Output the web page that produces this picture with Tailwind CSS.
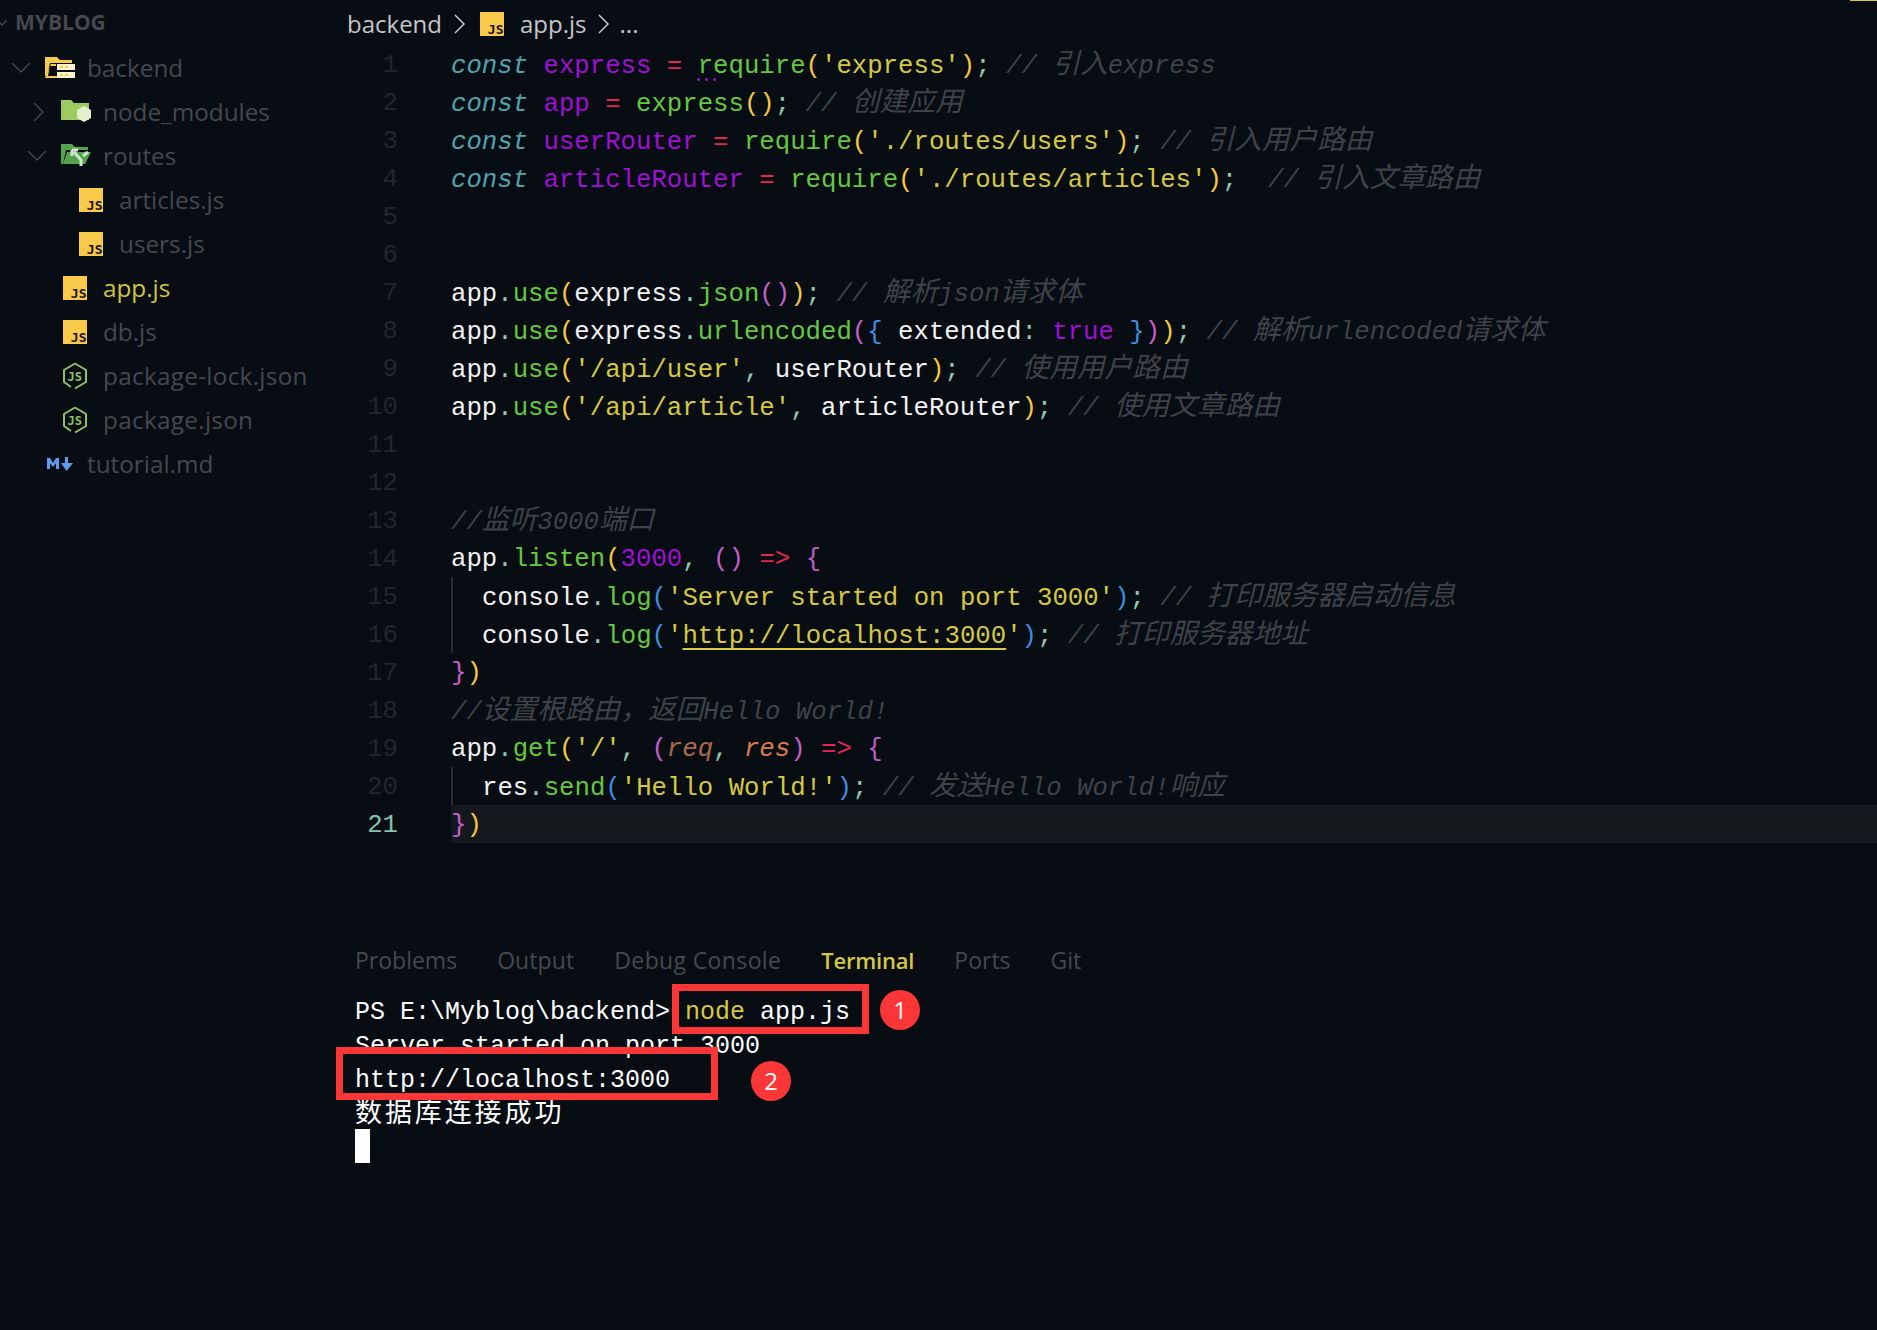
<!DOCTYPE html>
<html lang="en">
<head>
    <meta charset="UTF-8">
    <title>app.js - myblog</title>
    <script src="https://cdn.jsdelivr.net/npm/@tailwindcss/browser@4"></script>
</head>
<body class="bg-[#080c13]">
<svg class="hidden">
    <symbol id="js" viewBox="0 0 24 24"><rect width="24" height="24" fill="#f8ca4a"/><text x="23.500" y="22" text-anchor="end" font-family="DejaVu Sans Mono" font-weight="700" font-size="13" fill="#15130c">JS</text></symbol>
    <symbol id="nodejs" viewBox="0 0 24 28"><path d="M12 1.500 23 8v12l-11 6.500M8 25 1 20V8l11-6.500" fill="none" stroke="#8cc265" stroke-width="2"/><text x="19" y="19" text-anchor="end" font-family="DejaVu Sans Mono" font-weight="700" font-size="12" fill="#8cc265">JS</text></symbol>
</svg>

<div class="relative flex w-[1877px] h-[1330px] overflow-hidden bg-[#080c13]">
    <div class="absolute right-0 top-0 w-[27px] h-px bg-[#d6c93f]"></div>

    <!-- Explorer -->
    <aside class="w-[347px] shrink-0 font-['Open_Sans',sans-serif] text-[#45494d] text-[24.3px]">
        <div class="h-[46px] flex items-center gap-[8px] -ml-[3px]">
            <svg width="10" height="10" viewBox="0 0 10 10"><path d="M0 2l5 5 5-5" fill="none" stroke="#45494d" stroke-width="1.500"/></svg>
            <span class="font-bold text-[21px]">MYBLOG</span>
        </div>
        <div class="h-11 flex items-center">
            <svg class="ml-[11px] w-[20px]" height="12" viewBox="0 0 20 12"><path d="M1 1l9 9 9-9" fill="none" stroke="#45494d" stroke-width="1.500"/></svg>
            <svg class="ml-[14px] w-[30px]" height="24" viewBox="0 0 30 24"><path d="M0 1h12l3 3h12v3H5L2 20H0z" fill="#f8ca4a"/><path d="M6 8h5v2H5l-2 10h9v2H0z" fill="#f8ca4a"/><rect x="12" y="8" width="18" height="6" fill="#fff3cf"/><rect x="12" y="16" width="18" height="6" fill="#fff3cf"/><rect x="15" y="10" width="3" height="2" fill="#f8ca4a"/><rect x="20" y="10" width="3" height="2" fill="#f8ca4a"/><rect x="15" y="18" width="3" height="2" fill="#f8ca4a"/><rect x="20" y="18" width="3" height="2" fill="#f8ca4a"/></svg>
            <span class="ml-[12px]">backend</span>
        </div>
        <div class="h-11 flex items-center">
            <svg class="ml-[33px] w-[11px]" height="20" viewBox="0 0 11 20"><path d="M1 1l9 9-9 9" fill="none" stroke="#45494d" stroke-width="1.500"/></svg>
            <svg class="ml-[17px] w-[30px]" height="24" viewBox="0 0 30 24"><path d="M0 0h10l3 3h15v17H0z" fill="#9ccb5f"/><path d="M23 6l7 4v8l-7 4-7-4v-8z" fill="#e2f0d0"/></svg>
            <span class="ml-[12px]">node_modules</span>
        </div>
        <div class="h-11 flex items-center">
            <svg class="ml-[27px] w-[20px]" height="12" viewBox="0 0 20 12"><path d="M1 1l9 9 9-9" fill="none" stroke="#45494d" stroke-width="1.500"/></svg>
            <svg class="ml-[14px] w-[30px]" height="24" viewBox="0 0 30 24"><path d="M0 0h11l3 3h13v3H5L2 20H0z" fill="#55a24f"/><path d="M6 8h24l-6 12H2z" fill="#55a24f"/><path d="M20 22v-6l-7-8M11 6h6M11 6v6M22 12l5-4" fill="none" stroke="#cfe8cb" stroke-width="3"/></svg>
            <span class="ml-[12px]">routes</span>
        </div>
        <div class="h-11 flex items-center pl-[79px]"><svg width="24" height="24"><use href="#js"/></svg><span class="ml-[16px]">articles.js</span></div>
        <div class="h-11 flex items-center pl-[79px]"><svg width="24" height="24"><use href="#js"/></svg><span class="ml-[16px]">users.js</span></div>
        <div class="h-11 flex items-center pl-[63px] text-[#d0c63e]"><svg width="24" height="24"><use href="#js"/></svg><span class="ml-[16px]">app.js</span></div>
        <div class="h-11 flex items-center pl-[63px]"><svg width="24" height="24"><use href="#js"/></svg><span class="ml-[16px]">db.js</span></div>
        <div class="h-11 flex items-center pl-[63px]"><svg width="24" height="28"><use href="#nodejs"/></svg><span class="ml-[16px] tracking-[0.3px]">package-lock.json</span></div>
        <div class="h-11 flex items-center pl-[63px]"><svg width="24" height="28"><use href="#nodejs"/></svg><span class="ml-[16px] tracking-[0.3px]">package.json</span></div>
        <div class="h-11 flex items-center pl-[47px]">
            <svg width="27" height="14" viewBox="0 0 27 14"><path d="M0 1h3l3 5 3-5h3v11H9V6L6 10 3 6v6H0z" fill="#5b9df0"/><path d="M18 0h3v6h5l-6.500 8L14 6h4z" fill="#5b9df0"/></svg>
            <span class="ml-[13px]">tutorial.md</span>
        </div>
    </aside>

    <main class="flex-1 min-w-0 flex flex-col">
        <!-- Breadcrumb -->
        <div class="h-[45px] pt-[2px] shrink-0 flex items-center font-['Open_Sans',sans-serif] text-[24px] text-[#c4c6c8]">
            <span>backend</span>
            <svg class="ml-[12px]" width="12" height="20" viewBox="0 0 12 20"><path d="M1 1l9 9-9 9" fill="none" stroke="#c4c6c8" stroke-width="1.500"/></svg>
            <svg class="ml-[14px]" width="24" height="24"><use href="#js"/></svg>
            <span class="ml-[16px]">app.js</span>
            <svg class="ml-[11px]" width="12" height="20" viewBox="0 0 12 20"><path d="M1 1l9 9-9 9" fill="none" stroke="#c4c6c8" stroke-width="1.500"/></svg>
            <span class="ml-[10px]">...</span>
        </div>

        <!-- Editor -->
        <div class="shrink-0 flex flex-col font-['Liberation_Mono','Noto_Sans_CJK_SC',monospace] text-[25.7px] leading-[42px] whitespace-pre text-[#f2f2f2]">
            <div class="h-[38px] flex"><div class="w-[51px] text-right text-[#23272b]">1</div><div class="relative ml-[53px]"><span class="italic text-[#4fa3ad]">const</span> <span class="text-[#a00fd6]">express</span> <span class="text-[#e5264f]">=</span> <span class="text-[#64c840]">require</span><span class="text-[#f5c842]">(</span><span class="text-[#d6c93f]">'express'</span><span class="text-[#f5c842]">)</span><span class="text-[#8fc9b0]">;</span> <span class="italic text-[#3f4347]">// <span class="text-[27.7px]">引入</span>express</span><div class="absolute left-[246px] top-[33px] w-[19px] flex justify-between"><i class="size-[3px] rounded-full bg-[#a00fd6]"></i><i class="size-[3px] rounded-full bg-[#a00fd6]"></i><i class="size-[3px] rounded-full bg-[#a00fd6]"></i></div></div></div>
            <div class="h-[38px] flex"><div class="w-[51px] text-right text-[#23272b]">2</div><div class="ml-[53px]"><span class="italic text-[#4fa3ad]">const</span> <span class="text-[#a00fd6]">app</span> <span class="text-[#e5264f]">=</span> <span class="text-[#64c840]">express</span><span class="text-[#f5c842]">()</span><span class="text-[#8fc9b0]">;</span> <span class="italic text-[#3f4347]">// <span class="text-[27.7px]">创建应用</span></span></div></div>
            <div class="h-[38px] flex"><div class="w-[51px] text-right text-[#23272b]">3</div><div class="ml-[53px]"><span class="italic text-[#4fa3ad]">const</span> <span class="text-[#a00fd6]">userRouter</span> <span class="text-[#e5264f]">=</span> <span class="text-[#64c840]">require</span><span class="text-[#f5c842]">(</span><span class="text-[#d6c93f]">'./routes/users'</span><span class="text-[#f5c842]">)</span><span class="text-[#8fc9b0]">;</span> <span class="italic text-[#3f4347]">// <span class="text-[27.7px]">引入用户路由</span></span></div></div>
            <div class="h-[38px] flex"><div class="w-[51px] text-right text-[#23272b]">4</div><div class="ml-[53px]"><span class="italic text-[#4fa3ad]">const</span> <span class="text-[#a00fd6]">articleRouter</span> <span class="text-[#e5264f]">=</span> <span class="text-[#64c840]">require</span><span class="text-[#f5c842]">(</span><span class="text-[#d6c93f]">'./routes/articles'</span><span class="text-[#f5c842]">)</span><span class="text-[#8fc9b0]">;</span>  <span class="italic text-[#3f4347]">// <span class="text-[27.7px]">引入文章路由</span></span></div></div>
            <div class="h-[38px] flex"><div class="w-[51px] text-right text-[#23272b]">5</div></div>
            <div class="h-[38px] flex"><div class="w-[51px] text-right text-[#23272b]">6</div></div>
            <div class="h-[38px] flex"><div class="w-[51px] text-right text-[#23272b]">7</div><div class="ml-[53px]">app<span class="text-[#8fc9b0]">.</span><span class="text-[#64c840]">use</span><span class="text-[#f5c842]">(</span>express<span class="text-[#8fc9b0]">.</span><span class="text-[#64c840]">json</span><span class="text-[#c060c8]">()</span><span class="text-[#f5c842]">)</span><span class="text-[#8fc9b0]">;</span> <span class="italic text-[#3f4347]">// <span class="text-[27.7px]">解析</span>json<span class="text-[27.7px]">请求体</span></span></div></div>
            <div class="h-[38px] flex"><div class="w-[51px] text-right text-[#23272b]">8</div><div class="ml-[53px]">app<span class="text-[#8fc9b0]">.</span><span class="text-[#64c840]">use</span><span class="text-[#f5c842]">(</span>express<span class="text-[#8fc9b0]">.</span><span class="text-[#64c840]">urlencoded</span><span class="text-[#c060c8]">(</span><span class="text-[#3f8fe0]">{</span> extended<span class="text-[#8fc9b0]">:</span> <span class="text-[#a00fd6]">true</span> <span class="text-[#3f8fe0]">}</span><span class="text-[#c060c8]">)</span><span class="text-[#f5c842]">)</span><span class="text-[#8fc9b0]">;</span> <span class="italic text-[#3f4347]">// <span class="text-[27.7px]">解析</span>urlencoded<span class="text-[27.7px]">请求体</span></span></div></div>
            <div class="h-[38px] flex"><div class="w-[51px] text-right text-[#23272b]">9</div><div class="ml-[53px]">app<span class="text-[#8fc9b0]">.</span><span class="text-[#64c840]">use</span><span class="text-[#f5c842]">(</span><span class="text-[#d6c93f]">'/api/user'</span><span class="text-[#8fc9b0]">,</span> userRouter<span class="text-[#f5c842]">)</span><span class="text-[#8fc9b0]">;</span> <span class="italic text-[#3f4347]">// <span class="text-[27.7px]">使用用户路由</span></span></div></div>
            <div class="h-[38px] flex"><div class="w-[51px] text-right text-[#23272b]">10</div><div class="ml-[53px]">app<span class="text-[#8fc9b0]">.</span><span class="text-[#64c840]">use</span><span class="text-[#f5c842]">(</span><span class="text-[#d6c93f]">'/api/article'</span><span class="text-[#8fc9b0]">,</span> articleRouter<span class="text-[#f5c842]">)</span><span class="text-[#8fc9b0]">;</span> <span class="italic text-[#3f4347]">// <span class="text-[27.7px]">使用文章路由</span></span></div></div>
            <div class="h-[38px] flex"><div class="w-[51px] text-right text-[#23272b]">11</div></div>
            <div class="h-[38px] flex"><div class="w-[51px] text-right text-[#23272b]">12</div></div>
            <div class="h-[38px] flex"><div class="w-[51px] text-right text-[#23272b]">13</div><div class="ml-[53px] italic text-[#3f4347]">//<span class="text-[27.7px]">监听</span>3000<span class="text-[27.7px]">端口</span></div></div>
            <div class="h-[38px] flex"><div class="w-[51px] text-right text-[#23272b]">14</div><div class="ml-[53px]">app<span class="text-[#8fc9b0]">.</span><span class="text-[#64c840]">listen</span><span class="text-[#f5c842]">(</span><span class="text-[#a00fd6]">3000</span><span class="text-[#8fc9b0]">,</span> <span class="text-[#c060c8]">()</span> <span class="text-[#e5264f]">=&gt;</span> <span class="text-[#c060c8]">{</span></div></div>
            <div class="h-[38px] flex"><div class="w-[51px] text-right text-[#23272b]">15</div><div class="ml-[53px] border-l-2 border-[#2a2e33] pl-[29px]">console<span class="text-[#8fc9b0]">.</span><span class="text-[#64c840]">log</span><span class="text-[#3f8fe0]">(</span><span class="text-[#d6c93f]">'Server started on port 3000'</span><span class="text-[#3f8fe0]">)</span><span class="text-[#8fc9b0]">;</span> <span class="italic text-[#3f4347]">// <span class="text-[27.7px]">打印服务器启动信息</span></span></div></div>
            <div class="h-[38px] flex"><div class="w-[51px] text-right text-[#23272b]">16</div><div class="ml-[53px] border-l-2 border-[#2a2e33] pl-[29px]">console<span class="text-[#8fc9b0]">.</span><span class="text-[#64c840]">log</span><span class="text-[#3f8fe0]">(</span><span class="text-[#d6c93f]">'<span class="underline decoration-2 underline-offset-[5px]">http://localhost:3000</span>'</span><span class="text-[#3f8fe0]">)</span><span class="text-[#8fc9b0]">;</span> <span class="italic text-[#3f4347]">// <span class="text-[27.7px]">打印服务器地址</span></span></div></div>
            <div class="h-[38px] flex"><div class="w-[51px] text-right text-[#23272b]">17</div><div class="ml-[53px]"><span class="text-[#c060c8]">}</span><span class="text-[#f5c842]">)</span></div></div>
            <div class="h-[38px] flex"><div class="w-[51px] text-right text-[#23272b]">18</div><div class="ml-[53px] italic text-[#3f4347]">//<span class="text-[27.7px]">设置根路由，返回</span>Hello World!</div></div>
            <div class="h-[38px] flex"><div class="w-[51px] text-right text-[#23272b]">19</div><div class="ml-[53px]">app<span class="text-[#8fc9b0]">.</span><span class="text-[#64c840]">get</span><span class="text-[#f5c842]">(</span><span class="text-[#d6c93f]">'/'</span><span class="text-[#8fc9b0]">,</span> <span class="text-[#c060c8]">(</span><span class="italic text-[#a86a4d]">req</span><span class="text-[#8fc9b0]">,</span> <span class="italic text-[#d87a4a]">res</span><span class="text-[#c060c8]">)</span> <span class="text-[#e5264f]">=&gt;</span> <span class="text-[#c060c8]">{</span></div></div>
            <div class="h-[38px] flex"><div class="w-[51px] text-right text-[#23272b]">20</div><div class="ml-[53px] border-l-2 border-[#2a2e33] pl-[29px]">res<span class="text-[#8fc9b0]">.</span><span class="text-[#64c840]">send</span><span class="text-[#3f8fe0]">(</span><span class="text-[#d6c93f]">'Hello World!'</span><span class="text-[#3f8fe0]">)</span><span class="text-[#8fc9b0]">;</span> <span class="italic text-[#3f4347]">// <span class="text-[27.7px]">发送</span>Hello World!<span class="text-[27.7px]">响应</span></span></div></div>
            <div class="h-[38px] flex"><div class="w-[51px] text-right text-[#85c4ad]">21</div><div class="ml-[53px] flex-1 bg-[#15191d]"><span class="text-[#c060c8]">}</span><span class="text-[#f5c842]">)</span></div></div>
        </div>

        <!-- Panel -->
        <div class="mt-[96px] ml-[8px] flex items-center gap-[40px] font-['Open_Sans',sans-serif] text-[23px] leading-[42px] text-[#45494d]">
            <span>Problems</span>
            <span class="tracking-[0.1px]">Output</span>
            <span class="tracking-[0.37px]">Debug Console</span>
            <span class="font-semibold text-[22px] tracking-[-0.2px] text-[#d6c93f]">Terminal</span>
            <span>Ports</span>
            <span>Git</span>
        </div>
        <div class="relative mt-[15px] ml-[8px] flex flex-col font-['Liberation_Mono','Noto_Sans_CJK_SC',monospace] text-[25px] leading-[34px] whitespace-pre text-white">
            <div class="h-[34px]">PS E:\Myblog\backend&gt; <span class="text-[#d6c93f]">node</span> app.js</div>
            <div class="h-[34px]">Server started on port 3000</div>
            <div class="h-[34px]">http://localhost:3000</div>
            <div class="h-[34px] text-[27px] tracking-[2.900px]">数据库连接成功</div>
            <div class="w-[15px] h-[34px] -mt-[3px] bg-white"></div>

            <!-- Annotations -->
            <div class="absolute left-[317px] top-[-12px] w-[197px] h-[50px] border-[7px] border-[#fa3637]"></div>
            <div class="absolute left-[525px] top-[-6px] size-[40px] rounded-full bg-[#fa3637] flex items-center justify-center font-['Open_Sans',sans-serif] text-[24px] text-white">1</div>
            <div class="absolute left-[-19px] top-[51px] w-[382px] h-[53px] border-[7px] border-[#fa3637]"></div>
            <div class="absolute left-[396px] top-[65px] size-[40px] rounded-full bg-[#fa3637] flex items-center justify-center font-['Open_Sans',sans-serif] text-[24px] text-white">2</div>
        </div>
    </main>
</div>
</body>
</html>
